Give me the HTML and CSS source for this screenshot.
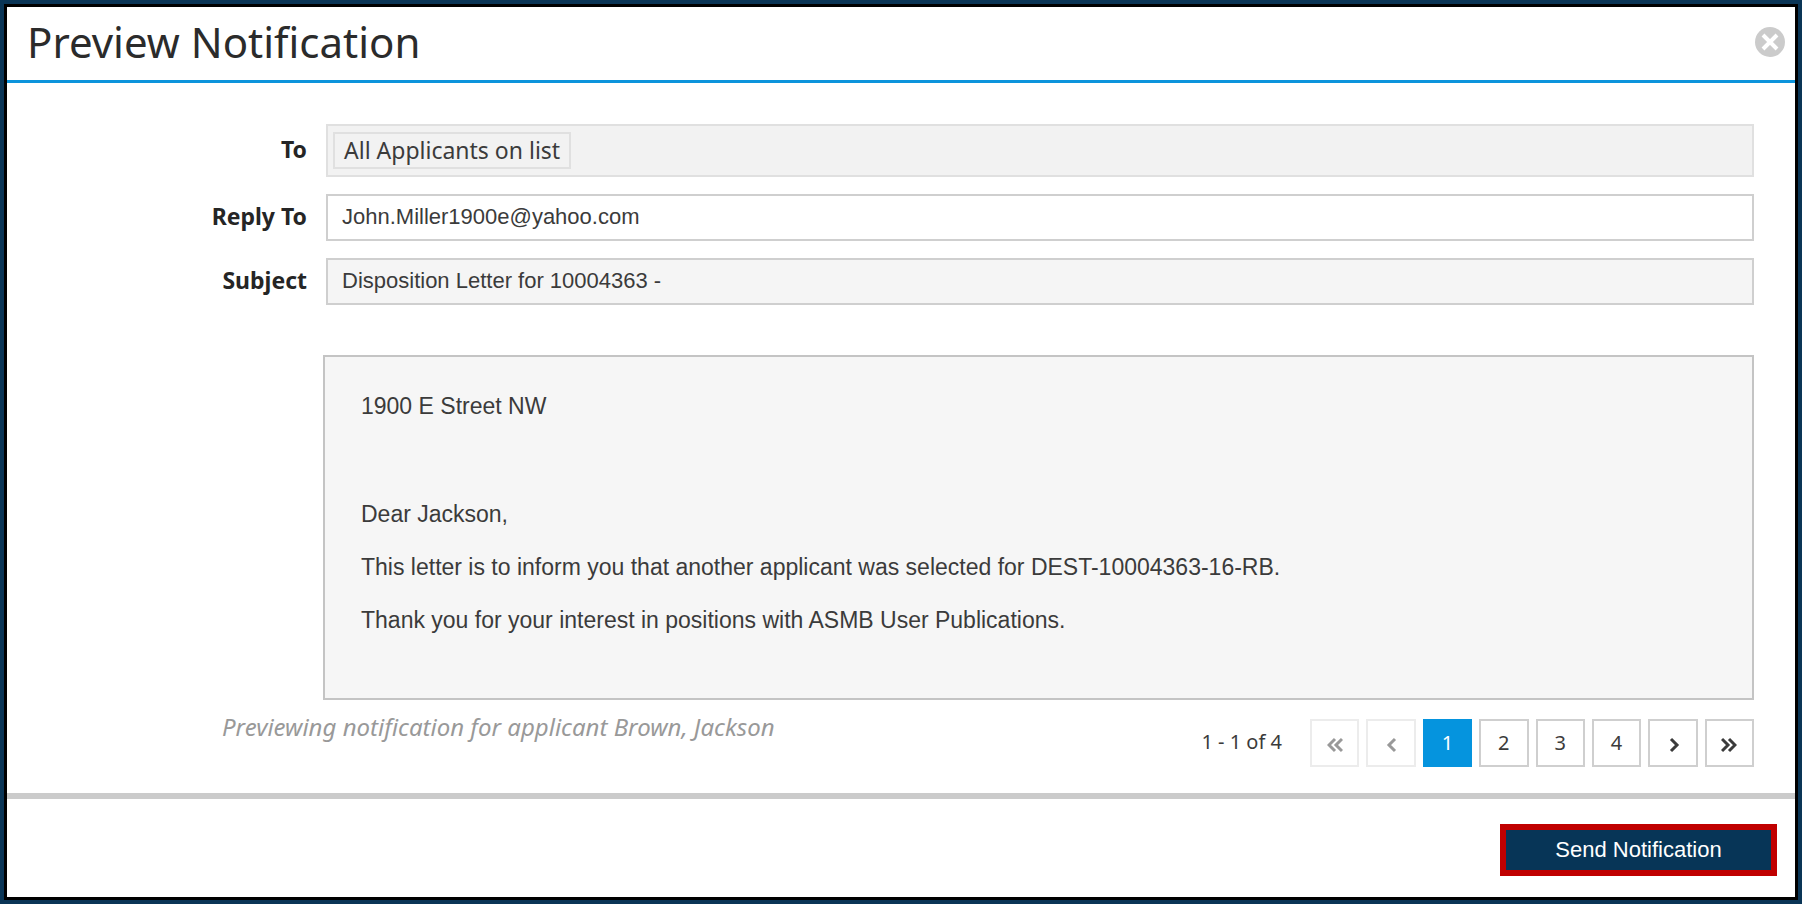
FILE: index.html
```
<!DOCTYPE html>
<html lang="en">
<head>
    <meta charset="UTF-8">
    <meta name="viewport" content="width=device-width, initial-scale=1.0">
    <title>Preview Notification</title>
    <link rel="stylesheet" href="styles.css">
</head>
<body>
    <div class="frame">
        <div class="modal" role="dialog" aria-labelledby="modal-title">
            <header class="modal-header">
                <h1 id="modal-title">Preview Notification</h1>
                <button type="button" class="close" aria-label="Close">
                    <svg width="30" height="30" viewBox="0 0 30 30">
                        <circle cx="15" cy="15" r="15" fill="#cbcbcb"/>
                        <path d="M8 8L22 22M22 8L8 22" stroke="#fff" stroke-width="4"/>
                    </svg>
                </button>
            </header>

            <main class="modal-body">
                <div class="field">
                    <span class="label" id="to-label">To</span>
                    <div class="recipients" aria-labelledby="to-label">
                        <span class="tag">All Applicants on list</span>
                    </div>
                </div>
                <div class="field">
                    <label class="label" for="replyTo">Reply To</label>
                    <input type="text" id="replyTo" value="John.Miller1900e@yahoo.com">
                </div>
                <div class="field">
                    <label class="label" for="subject">Subject</label>
                    <input type="text" id="subject" value="Disposition Letter for 10004363 -" readonly>
                </div>

                <div class="letter">
                    <p>1900 E Street NW</p>
                    <p class="blank">&nbsp;</p>
                    <p>Dear Jackson,</p>
                    <p>This letter is to inform you that another applicant was selected for DEST-10004363-16-RB.</p>
                    <p>Thank you for your interest in positions with ASMB User Publications.</p>
                </div>

                <div class="preview-bar">
                    <p class="preview-note">Previewing notification for applicant Brown, Jackson</p>
                    <span class="page-count">1 - 1 of 4</span>
                    <nav class="pager" aria-label="Pages">
                        <button type="button" disabled aria-label="First page">
                            <svg width="16" height="16" viewBox="0 0 16 16"><path d="M8 2L2 8L8 14M15 2L9 8L15 14"/></svg>
                        </button>
                        <button type="button" disabled aria-label="Previous page">
                            <svg width="16" height="16" viewBox="0 0 16 16"><path d="M12 2L6 8L12 14"/></svg>
                        </button>
                        <button type="button" class="active">1</button>
                        <button type="button">2</button>
                        <button type="button">3</button>
                        <button type="button">4</button>
                        <button type="button" aria-label="Next page">
                            <svg width="16" height="16" viewBox="0 0 16 16"><path d="M6 2L12 8L6 14"/></svg>
                        </button>
                        <button type="button" aria-label="Last page">
                            <svg width="16" height="16" viewBox="0 0 16 16"><path d="M1 2L7 8L1 14M8 2L14 8L8 14"/></svg>
                        </button>
                    </nav>
                </div>
            </main>

            <footer class="modal-footer">
                <button type="button" class="send">Send Notification</button>
            </footer>
        </div>
    </div>
</body>
</html>
```
FILE: styles.css
```
* {
    box-sizing: border-box;
}
body {
    margin: 0;
    font-family: "Noto Sans", sans-serif;
    font-size: 23px;
    color: #3b3b3b;
    background: #fff;
}
p {
    margin: 0;
}
button {
    font-family: inherit;
    cursor: pointer;
}
.frame {
    min-height: 100vh;
    display: flex;
    border: 4px solid #0a3556;
}
.modal {
    flex: 1;
    display: flex;
    flex-direction: column;
    border: 3px solid #000;
}

/* header */
.modal-header {
    display: flex;
    align-items: center;
    justify-content: space-between;
    height: 76px;
    padding: 0 10px 3px 20px;
    border-bottom: 3px solid #0c94dc;
}
.modal-header h1 {
    margin: 0;
    font-size: 42px;
    font-weight: 400;
    line-height: 56px;
    color: #2b2b2b;
}
.close {
    display: flex;
    padding: 0;
    border: none;
    background: none;
}

/* form */
.modal-body {
    flex: 1;
    padding: 41px 41px 24px 0;
}
.field {
    display: grid;
    grid-template-columns: 300px 1fr;
    column-gap: 19px;
    align-items: center;
    margin-bottom: 17px;
}
.label {
    padding-bottom: 4px;
    text-align: right;
    font-weight: 700;
    color: #252525;
}
.field input {
    width: 100%;
    height: 47px;
    padding: 0 14px 1px;
    border: 2px solid #cfcfcf;
    font-family: "Liberation Sans", Arial, sans-serif;
    font-size: 22px;
    color: #3b3b3b;
    background: #fff;
}
.field input[readonly] {
    background: #f5f5f5;
}
.recipients {
    display: flex;
    padding: 6px 5px;
    border: 2px solid #e0e0e0;
    background: #f2f2f2;
}
.tag {
    padding: 0 9px;
    border: 2px solid #e0e0e0;
    line-height: 33px;
}

/* letter */
.letter {
    margin: 50px 0 0 316px;
    padding: 36px 36px 64px;
    border: 2px solid #c4c4c4;
    background: #f6f6f6;
    font-family: "Liberation Sans", Arial, sans-serif;
    font-size: 23px;
    line-height: 27px;
}
.letter p + p {
    margin-top: 26px;
}
.letter .blank {
    line-height: 29px;
}

/* pager */
.preview-bar {
    display: flex;
    margin-top: 19px;
    padding-left: 215px;
}
.preview-note {
    flex: 1;
    font-size: 24px;
    line-height: 16px;
    font-style: italic;
    color: #999;
}
.page-count {
    margin-right: 28px;
    font-size: 20px;
    line-height: 46px;
}
.pager {
    display: grid;
    grid-template-columns: repeat(8, 1fr);
    gap: 7px;
    width: 444px;
}
.pager button {
    display: flex;
    align-items: center;
    justify-content: center;
    height: 48px;
    padding: 0 0 2px;
    border: 2px solid #cfcfcf;
    background: #fff;
    font-size: 20px;
    color: #3b3b3b;
}
.pager button:disabled {
    border-color: #ececec;
    color: #999;
}
.pager .active {
    border-color: #0594de;
    background: #0594de;
    color: #fff;
}
.pager svg {
    margin-top: 5px;
    fill: none;
    stroke: currentColor;
    stroke-width: 3;
}

/* footer */
.modal-footer {
    display: flex;
    justify-content: flex-end;
    padding: 25px 18px 21px;
    border-top: 6px solid #cbcbcb;
}
.send {
    width: 277px;
    height: 52px;
    padding: 0;
    border: 6px solid #c00000;
    background: #073557;
    color: #fff;
    font-family: "Liberation Sans", Arial, sans-serif;
    font-size: 22px;
}
```
